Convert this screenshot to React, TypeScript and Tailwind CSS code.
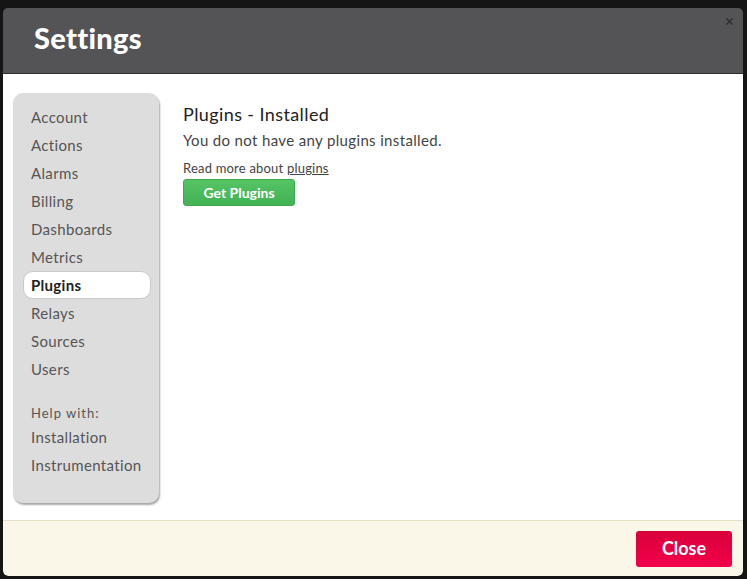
import { X } from 'lucide-react'

const navItems = ['Account', 'Actions', 'Alarms', 'Billing', 'Dashboards', 'Metrics', 'Plugins', 'Relays', 'Sources', 'Users']
const helpItems = ['Installation', 'Instrumentation']

function NavLink({ label, active }: { label: string; active?: boolean }) {
  if (active) {
    return (
      <div className="ml-[10px] mr-[8px] flex h-[28px] items-center rounded-[10px] border border-[#c9c9c9] bg-white pl-[7px] text-[15px] font-bold tracking-[0.3px] text-[#222]">
        {label}
      </div>
    )
  }
  return <div className="flex h-[28px] items-center pl-[18px] text-[15px] tracking-[0.35px] text-[#555]">{label}</div>
}

export default function App() {
  return (
    <div className="h-[579px] w-[747px] bg-[#151515] pl-[3px] pt-[8px] font-['Lato','Open_Sans',sans-serif]">
      <div className="flex h-[568px] w-[740px] flex-col overflow-hidden rounded-[5px]">
        <div className="relative flex h-[66px] shrink-0 items-center border-b border-[#2e2e2e] bg-[#545456] pb-[5px] pl-[31px]">
          <h1 className="text-[29px] font-black tracking-[0.3px] text-white">Settings</h1>
          <X className="absolute right-[8px] top-[8px] text-[#2a2a2a]" size={11} strokeWidth={2.5} />
        </div>
        <div className="flex flex-1 bg-white pl-[10px] pt-[19px]">
          <nav className="h-[410px] w-[146px] shrink-0 rounded-[10px] bg-[#dddddd] pt-[10px] shadow-[1px_2px_2px_rgba(0,0,0,0.35)]">
            {navItems.map((item) => (
              <NavLink key={item} label={item} active={item === 'Plugins'} />
            ))}
            <div className="mt-[22px] flex h-[18px] items-center pl-[18px] text-[13px] tracking-[1px] text-[#555]">Help with:</div>
            {helpItems.map((item) => (
              <NavLink key={item} label={item} />
            ))}
          </nav>
          <main className="pl-[24px] pt-[9px]">
            <h2 className="text-[18px] leading-[24px] tracking-[0.4px] text-[#222]">Plugins - Installed</h2>
            <p className="mt-[4px] text-[15px] leading-[20px] tracking-[0.35px] text-[#444]">You do not have any plugins installed.</p>
            <p className="mt-[10px] text-[13px] leading-[16px] tracking-[0.2px] text-[#444]">
              Read more about <span className="underline">plugins</span>
            </p>
            <button className="mt-[3px] h-[27px] w-[112px] rounded-[3px] border border-[#3fa74e] bg-gradient-to-b from-[#55c465] to-[#43b254] text-[14px] font-bold text-white">
              Get Plugins
            </button>
          </main>
        </div>
        <div className="flex h-[56px] shrink-0 items-center justify-end rounded-b-[5px] border-t border-[#e6e0c8] bg-[#faf7e8] pr-[11px]">
          <button className="h-[36px] w-[96px] rounded-[3px] bg-gradient-to-b from-[#d9003b] to-[#f2004a] text-[18px] font-bold text-white">
            Close
          </button>
        </div>
      </div>
    </div>
  )
}
